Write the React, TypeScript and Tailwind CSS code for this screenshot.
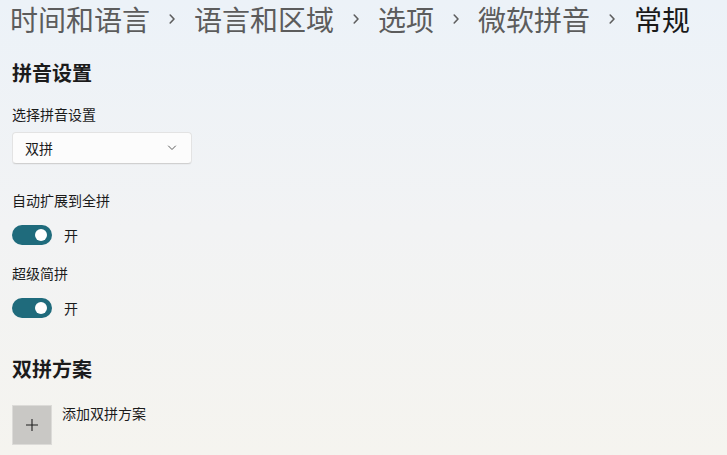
import React from "react";

const font = { fontFamily: '"Noto Sans CJK SC", "Noto Sans", sans-serif' };

function Chevron() {
  return (
    <span className="flex w-[44px] items-center justify-center self-stretch">
      <svg width="8" height="12" viewBox="0 0 8 12" fill="none">
        <path d="M2.2 2 L6 6 L2.2 10" stroke="#5e5e5e" strokeWidth="1.6" strokeLinecap="round" strokeLinejoin="round" />
      </svg>
    </span>
  );
}

function Toggle() {
  return (
    <div className="flex items-center">
      <div className="flex h-[20px] w-[40px] items-center justify-end rounded-full bg-[#1f6b7c] pr-[5px]">
        <div className="h-[12px] w-[12px] rounded-full bg-white" />
      </div>
      <span className="ml-[12px] text-[14px] leading-[20px] text-[#1b1b1b]">开</span>
    </div>
  );
}

export default function App() {
  const crumbs = ["时间和语言", "语言和区域", "选项", "微软拼音"];
  return (
    <div
      className="flex h-[455px] w-[727px] flex-col overflow-hidden bg-gradient-to-b from-[#ecf2f8] via-[#f2f3f4] to-[#f5f4ef] px-[12px]"
      style={font}
    >
      <div className="-ml-[2px] flex items-center whitespace-nowrap text-[28px] leading-[38px]">
        {crumbs.map((c) => (
          <React.Fragment key={c}>
            <span className="text-[#5c5c5c]">{c}</span>
            <Chevron />
          </React.Fragment>
        ))}
        <span className="text-[#1a1a1a]">常规</span>
      </div>

      <div className="mt-[21px] text-[20px] font-semibold leading-[28px] text-[#1b1b1b]">拼音设置</div>
      <div className="mt-[17px] text-[14px] leading-[20px] text-[#1b1b1b]">选择拼音设置</div>
      <div className="mt-[8px] flex h-[32px] w-[180px] items-center justify-between rounded-[4px] border border-[#e3e3e3] border-b-[#d0d0d0] bg-[#fcfcfc] pl-[12px] pr-[14px] shadow-[0_1px_1px_rgba(0,0,0,0.03)]">
        <span className="text-[14px] leading-[20px] text-[#1b1b1b]">双拼</span>
        <svg width="10" height="6" viewBox="0 0 10 6" fill="none">
          <path d="M1.5 1 L5 4.5 L8.5 1" stroke="#5c5c5c" strokeWidth="1" strokeLinecap="round" strokeLinejoin="round" />
        </svg>
      </div>

      <div className="mt-[26px] text-[14px] leading-[20px] text-[#1b1b1b]">自动扩展到全拼</div>
      <div className="mt-[15px]">
        <Toggle />
      </div>

      <div className="mt-[18px] text-[14px] leading-[20px] text-[#1b1b1b]">超级简拼</div>
      <div className="mt-[15px]">
        <Toggle />
      </div>

      <div className="mt-[37px] text-[20px] font-semibold leading-[28px] text-[#1b1b1b]">双拼方案</div>
      <div className="mt-[22px] flex items-start">
        <div className="flex h-[40px] w-[40px] items-center justify-center border border-[#dcdbd8] bg-[#c9c8c5]">
          <svg width="14" height="14" viewBox="0 0 14 14" fill="none">
            <path d="M7 1 V13 M1 7 H13" stroke="#1f1f1f" strokeWidth="1.1" />
          </svg>
        </div>
        <span className="-mt-[2px] ml-[10px] text-[14px] leading-[20px] text-[#1b1b1b]">添加双拼方案</span>
      </div>
    </div>
  );
}
